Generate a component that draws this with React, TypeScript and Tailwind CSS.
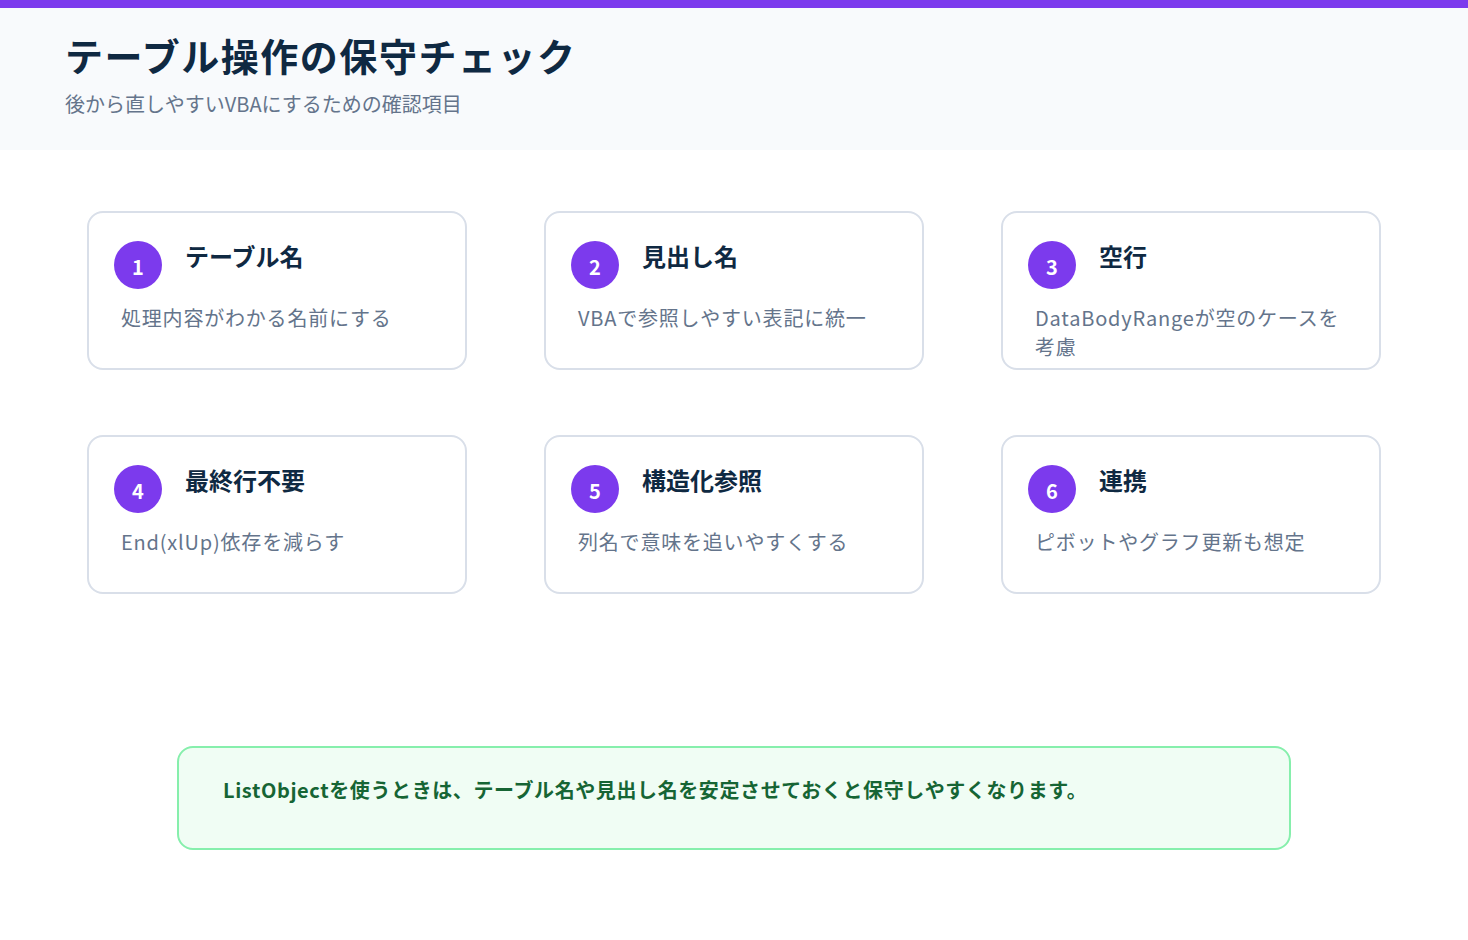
const items = [
  { n: 1, t: "テーブル名", d: "処理内容がわかる名前にする" },
  { n: 2, t: "見出し名", d: "VBAで参照しやすい表記に統一" },
  { n: 3, t: "空行", d: "DataBodyRangeが空のケースを考慮" },
  { n: 4, t: "最終行不要", d: "End(xlUp)依存を減らす" },
  { n: 5, t: "構造化参照", d: "列名で意味を追いやすくする" },
  { n: 6, t: "連携", d: "ピボットやグラフ更新も想定" },
];

export default function App() {
  return (
    <div className="min-h-[940px] bg-white" style={{ fontFamily: '"Noto Sans CJK JP", "Noto Sans", sans-serif' }}>
      <div className="h-2 bg-[#7c3aed]" />
      <header className="h-[142px] bg-[#f8fafc] px-[65px] pt-[22px]">
        <h1 className="text-[38px] font-bold leading-[50px] tracking-[0.04em] text-[#0f2942]">テーブル操作の保守チェック</h1>
        <p className="mt-[10px] text-[20px] leading-[28px] text-[#64748b]">後から直しやすいVBAにするための確認項目</p>
      </header>
      <div className="grid grid-cols-3 gap-x-[77px] gap-y-[65px] px-[87px] pt-[61px]">
        {items.map((it) => (
          <div key={it.n} className="h-[159px] rounded-2xl border-2 border-[#d9dfe9] bg-white pl-[25px] pr-[32px] pt-[28px]">
            <div className="flex items-start gap-[23px]">
              <div className="flex h-12 w-12 shrink-0 items-center justify-center rounded-full bg-[#7c3aed] pt-1 text-[20px] font-bold text-white">{it.n}</div>
              <div className="text-[24px] font-bold leading-[30px] text-[#0f2942]">{it.t}</div>
            </div>
            <p className="mt-[14px] pl-[7px] text-[20px] leading-[29px] tracking-[0.04em] text-[#64748b]">{it.d}</p>
          </div>
        ))}
      </div>
      <div className="mx-[177px] mt-[152px] h-[104px] rounded-2xl border-2 border-[#86efac] bg-[#f0fdf4] px-[44px] pt-[27px]">
        <p className="text-[20px] font-bold leading-[30px] tracking-[0.03em] text-[#166534]">ListObjectを使うときは、テーブル名や見出し名を安定させておくと保守しやすくなります。</p>
      </div>
    </div>
  );
}
